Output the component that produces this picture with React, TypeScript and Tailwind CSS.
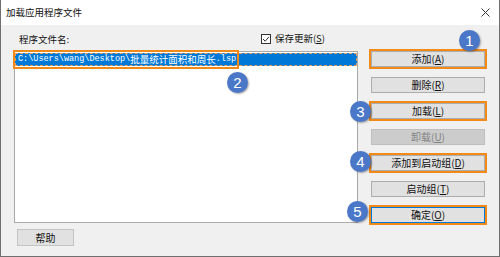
import React from "react";

const CJK = "font-['Noto_Sans_CJK_SC','Noto_Sans',sans-serif]";

function Btn({
  label,
  k,
  ann,
  disabled,
  primary,
}: {
  label: string;
  k: string;
  ann?: boolean;
  disabled?: boolean;
  primary?: boolean;
}) {
  return (
    <div
      className={[
        "h-[16px] w-[114px] flex items-center justify-center text-[10px] leading-none",
        disabled
          ? "bg-[#cccccc] border border-[#bfbfbf] text-[#838383]"
          : primary
          ? "bg-[#e1e1e1] border border-[#0078d7] text-[#111]"
          : "bg-[#e1e1e1] border border-[#adadad] text-[#111]",
        ann ? "outline-2 outline-[#f28a1a]" : "",
      ].join(" ")}
    >
      <span>
        {label}(<span className="underline">{k}</span>)
      </span>
    </div>
  );
}

function Num({ n, cls }: { n: number; cls: string }) {
  return (
    <div
      className={
        "absolute w-[21px] h-[21px] rounded-full bg-[#4a77c7] shadow-[1px_1px_2px_rgba(0,0,0,0.35)] flex items-center justify-center text-white text-[15px] font-['Liberation_Sans',sans-serif] leading-none " +
        cls
      }
    >
      {n}
    </div>
  );
}

export default function App() {
  return (
    <div
      className={
        "relative w-[500px] h-[257px] flex flex-col border-l border-r border-b border-[#6f6f6f] bg-[#f0f0f0] overflow-hidden " +
        CJK
      }
    >
      {/* title bar */}
      <div className="h-[25px] bg-white flex items-center justify-between pl-[5px] pr-[8px]">
        <span className="text-[9.5px] text-[#111]">加载应用程序文件</span>
        <svg width="9" height="9" viewBox="0 0 9 9" className="mr-[1px]">
          <path d="M0.5 0.5 L8.5 8.5 M8.5 0.5 L0.5 8.5" stroke="#333" strokeWidth="1" />
        </svg>
      </div>

      {/* body */}
      <div className="flex-1 flex pl-[13px] pr-[13px] gap-[13px]">
        {/* left */}
        <div className="w-[344px] flex flex-col">
          <div className="h-[26px] flex items-center justify-between pl-[5px] pr-[33px] pt-[3px]">
            <span className="text-[9.5px] text-[#111]">程序文件名:</span>
            <div className="flex items-center gap-[4px] text-[9.5px] text-[#111] -mt-[2px]">
              <svg width="10" height="10" viewBox="0 0 10 10">
                <rect x="0.5" y="0.5" width="9" height="9" fill="white" stroke="#333" />
                <path d="M2 5 L4.2 7.2 L8 2.8" fill="none" stroke="#333" strokeWidth="1" />
              </svg>
              <span>
                保存更新(<span className="underline">S</span>)
              </span>
            </div>
          </div>
          <div className="relative h-[172px] bg-white border border-[#a9a9a9]">
            <div className="mt-[1px] h-[13px] bg-[#0078d7] border border-dashed border-[#e8a060] flex items-center pl-[2px] text-white whitespace-nowrap leading-none">
              <span className="font-['Liberation_Mono',monospace] text-[8.5px]">C:\Users\wang\Desktop\</span>
              <span className="text-[9.5px]">批量统计面积和周长</span>
              <span className="font-['Liberation_Mono',monospace] text-[8.5px]">.lsp</span>
            </div>
            <div className="absolute left-[-2px] top-[-2px] w-[226px] h-[19px] border-2 border-[#f28a1a]" />
          </div>
          <div className="mt-[6px] ml-[3px] w-[57px] h-[17px] bg-[#e1e1e1] border border-[#c4c4c4] flex items-center justify-center text-[10px] text-[#111]">
            帮助
          </div>
        </div>

        {/* right */}
        <div className="w-[114px] flex flex-col gap-[10px] pt-[26px]">
          <Btn label="添加" k="A" ann />
          <Btn label="删除" k="R" />
          <Btn label="加载" k="L" ann />
          <Btn label="卸载" k="U" disabled />
          <Btn label="添加到启动组" k="D" ann />
          <Btn label="启动组" k="T" />
          <Btn label="确定" k="O" ann primary />
        </div>
      </div>

      <Num n={1} cls="left-[458px] top-[30px]" />
      <Num n={2} cls="left-[226px] top-[72px]" />
      <Num n={3} cls="left-[349px] top-[101px]" />
      <Num n={4} cls="left-[349px] top-[151px]" />
      <Num n={5} cls="left-[346px] top-[201px]" />
    </div>
  );
}
